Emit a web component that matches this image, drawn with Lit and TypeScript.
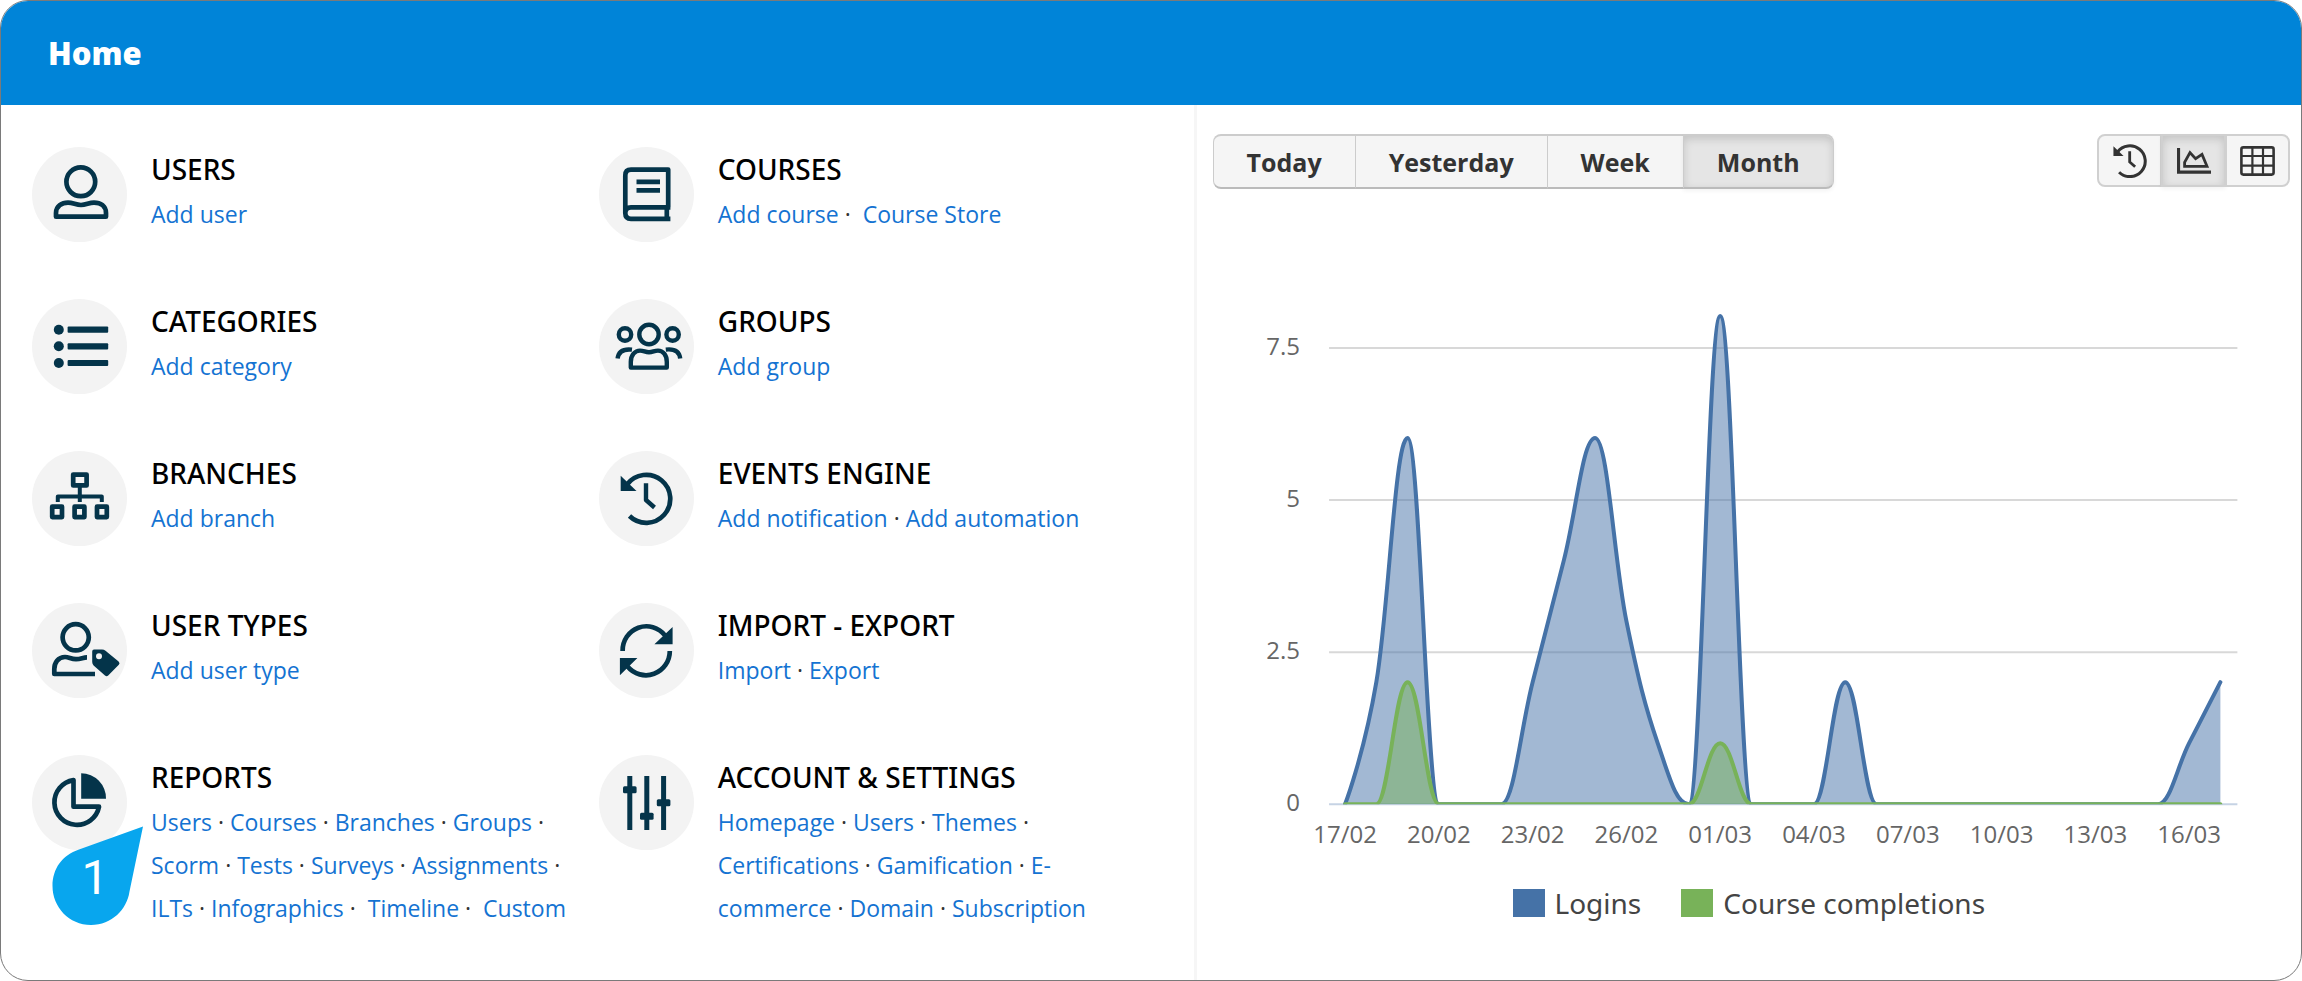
import { LitElement, html, css, svg, TemplateResult } from "lit";
import { customElement, property, state } from "lit/decorators.js";
import { classMap } from "lit/directives/class-map.js";

const historyShape = svg`
  <path d="M28 33.5 A24 24 0 1 1 30.5 65" fill="none" stroke="currentColor" stroke-width="4.7" />
  <path d="M21.7 24.7 V39.9 H37.5 Z" fill="currentColor" stroke="none" />
  <path d="M47 32.3 V49 L55.5 56.5" fill="none" stroke="currentColor" stroke-width="4.4" />
`;

const tileIcons: Record<string, TemplateResult> = {
  user: svg`
    <circle cx="48.8" cy="34.8" r="14.4" />
    <path d="M24 69.7 V66 C24 59 30 55.6 36 55.6 C41 55.6 44 58 49 58 C54 58 57 55.6 62 55.6 C68.5 55.6 74 59 74 66 V69.7 Z" />
  `,
  list: svg`
    <g class="solid">
      <circle cx="26.8" cy="30.7" r="5" /><circle cx="26.8" cy="47.3" r="5" /><circle cx="26.8" cy="64" r="5" />
      <rect x="35.6" y="27.6" width="40.6" height="6.2" rx="1" />
      <rect x="35.6" y="44.2" width="40.6" height="6.2" rx="1" />
      <rect x="35.6" y="60.9" width="40.6" height="6.2" rx="1" />
    </g>
  `,
  tree: svg`
    <rect x="41.2" y="23.6" width="13.4" height="10.8" />
    <path d="M47.8 36 V51 M25.8 51 V45.4 H69.8 V51" stroke-width="4" />
    <rect x="20.2" y="55.7" width="9.8" height="10.4" />
    <rect x="42.6" y="55.7" width="9.8" height="10.4" />
    <rect x="65" y="55.7" width="9.8" height="10.4" />
  `,
  userTag: svg`
    <circle cx="43.7" cy="34.3" r="13.1" />
    <path d="M55 54.3 C51 54.3 49 56.2 44 56.2 C39 56.2 37 54 33 54 C26 54 22.3 60 22.3 66 V71 H63" />
    <path class="solid" fill-rule="evenodd" d="M62 46.4 H70 Q72 46.4 73.5 47.8 L86.6 58.4 Q88.4 60 86.8 61.8 L76.2 72.4 Q74.6 74 73 72.4 L61.6 62.4 Q60.2 61 60.2 59 V48.4 Q60.2 46.4 62 46.4 Z M67 50.3 A3 3 0 1 0 67 56.3 A3 3 0 1 0 67 50.3 Z" />
  `,
  pie: svg`
    <path d="M41.5 25.1 V51.7 H67 A22.5 22.5 0 1 1 41.5 25.1 Z" />
    <path class="solid" d="M49.2 18.3 A25 25 0 0 1 74 43.7 H49.2 Z" />
  `,
  book: svg`
    <path d="M69.2 60.3 V22.6 H32 Q26.3 22.6 26.3 28.4 V66 Q26.3 71.8 32 71.8 H71.4 M26.3 66 Q26.3 60.3 32 60.3 H71.4 M67.8 60.3 V71.8" />
    <path d="M37.5 34.8 H61 M37.5 43.4 H61" />
  `,
  group: svg`
    <g stroke-width="4.4">
      <circle cx="50" cy="35.5" r="9.7" />
      <circle cx="26" cy="35.5" r="6.2" />
      <circle cx="73.6" cy="35.5" r="6.2" />
      <path d="M31.8 68.6 V63 C31.8 56 36 51.6 41 51.6 C45 51.6 46 53.2 50 53.2 C54 53.2 55 51.6 59 51.6 C64 51.6 67.8 56 67.8 63 V68.6 Z" />
      <path d="M33 50.6 C24 49.6 19.4 52.6 18.6 59.6 M66.8 50.6 C75.6 49.6 80.4 52.6 81.2 59.6" />
    </g>
  `,
  history: historyShape,
  sync: svg`
    <path d="M23.6 48 A23.8 24.2 0 0 1 66 32.4 M70.8 48 A23.8 24.2 0 0 1 28.6 63.4" />
    <path class="solid" d="M73.6 24 V41.3 H55.4 Z M20.9 72.2 V55 H38.4 Z" />
  `,
  sliders: svg`
    <path d="M30.8 21 V75 M47.8 21 V75 M64.6 21 V75" stroke-width="5" />
    <g class="solid">
      <rect x="24" y="31.2" width="13.6" height="7" rx="1.5" />
      <rect x="41" y="57.8" width="13.6" height="7" rx="1.5" />
      <rect x="57.8" y="44.2" width="13.6" height="7" rx="1.5" />
    </g>
  `,
};

interface Tile {
  icon: string;
  title: string;
  links: string[];
  /** Links whose separator is followed by a wider space. */
  wideAfter?: string[];
}

const tiles: Tile[] = [
  { icon: "user", title: "USERS", links: ["Add user"] },
  { icon: "book", title: "COURSES", links: ["Add course", "Course Store"], wideAfter: ["Add course"] },
  { icon: "list", title: "CATEGORIES", links: ["Add category"] },
  { icon: "group", title: "GROUPS", links: ["Add group"] },
  { icon: "tree", title: "BRANCHES", links: ["Add branch"] },
  { icon: "history", title: "EVENTS ENGINE", links: ["Add notification", "Add automation"] },
  { icon: "userTag", title: "USER TYPES", links: ["Add user type"] },
  { icon: "sync", title: "IMPORT - EXPORT", links: ["Import", "Export"] },
  {
    icon: "pie",
    title: "REPORTS",
    links: ["Users", "Courses", "Branches", "Groups", "Scorm", "Tests", "Surveys", "Assignments", "ILTs", "Infographics", "Timeline", "Custom"],
    wideAfter: ["Infographics", "Timeline"],
  },
  {
    icon: "sliders",
    title: "ACCOUNT & SETTINGS",
    links: ["Homepage", "Users", "Themes", "Certifications", "Gamification", "E-commerce", "Domain", "Subscription"],
  },
];

@customElement("nav-tile")
export class NavTile extends LitElement {
  @property({ attribute: false }) tile!: Tile;

  static styles = css`
    :host { display: flex; align-items: flex-start; gap: 24px; height: 95px; }
    .disc { flex: none; width: 95px; height: 95px; border-radius: 50%; background: #f3f3f3; color: #04344a; }
    .disc svg { display: block; width: 95px; height: 95px; fill: none; stroke: currentColor; stroke-width: 4.7; stroke-linejoin: round; }
    .disc .solid { fill: currentColor; stroke: none; }
    .body { flex: 1; min-width: 0; padding-right: 16px; color: #333; font-size: 23px; line-height: 43px; }
    .title { margin: 1px 0 3px; color: #000; font: 500 28px/42px "Noto Sans", "Open Sans", sans-serif; }
    .links { margin: 0; }
    .link { color: #1473d2; text-decoration: none; }
  `;

  render() {
    const { icon, title, links, wideAfter = [] } = this.tile;
    return html`
      <div class="disc"><svg viewBox="0 0 95 95" aria-hidden="true">${tileIcons[icon]}</svg></div>
      <div class="body">
        <h2 class="title">${title}</h2>
        <p class="links">${links.map((name, i) => html`<a class="link" href="#">${name}</a>${
          i === links.length - 1 ? "" : wideAfter.includes(name) ? " ·\u00a0 " : " · "
        }`)}</p>
      </div>
    `;
  }
}

const logins = [0, 2, 6, 0, 0, 0, 2, 4, 6, 3, 1, 0, 8, 0, 0, 0, 2, 0, 0, 0, 0, 0, 0, 0, 0, 0, 0, 1, 2];
const completions = logins.map((_, i) => (i === 2 ? 2 : i === 12 ? 1 : 0));
const dayLabels = ["17/02", "20/02", "23/02", "26/02", "01/03", "04/03", "07/03", "10/03", "13/03", "16/03"];

@customElement("activity-chart")
export class ActivityChart extends LitElement {
  static styles = css`
    :host { display: block; }
    .plot { display: block; width: 100%; height: auto; }
    .tick { fill: #666; font-size: 24px; }
    .grid { stroke: #d8d8d8; stroke-width: 2; }
    .axis { stroke: #c6d3e4; stroke-width: 2; }
    .line { fill: none; stroke-width: 4; stroke-linejoin: round; stroke-linecap: round; }
    .area { fill-opacity: 0.5; }
    .blue { stroke: #4572a7; }
    .green { stroke: #78b259; }
    .area.blue { fill: #4572a7; stroke: none; }
    .area.green { fill: #78b259; stroke: none; }
    .legend { display: flex; justify-content: center; gap: 40px; margin: 22px 0 0; padding: 0; list-style: none; color: #444; font: 28px/42px "Noto Sans", "Open Sans", sans-serif; }
    .entry { display: flex; align-items: center; gap: 10px; }
    .swatch { width: 32px; height: 28px; }
    .swatch.blue { background: #4572a7; }
    .swatch.green { background: #78b259; }
  `;

  private readonly left = 148;
  private readonly step = 31.25;
  private readonly base = 574;
  private readonly unit = 61;

  /** Smooth curve through the values whose control points never overshoot a neighbour. */
  private curve(values: number[]) {
    const pts = values.map((v, i) => [this.left + i * this.step, this.base - v * this.unit]);
    let d = `M${pts[0][0]} ${pts[0][1]}`;
    let [outX, outY] = pts[0];
    for (let i = 1; i < pts.length; i++) {
      const [x, y] = pts[i];
      const [px, py] = pts[i - 1];
      let inX = x, inY = y, nextOutX = x, nextOutY = y;
      if (i < pts.length - 1) {
        const [nx, ny] = pts[i + 1];
        inX = (1.5 * x + px) / 2.5;
        inY = (1.5 * y + py) / 2.5;
        nextOutX = (1.5 * x + nx) / 2.5;
        nextOutY = (1.5 * y + ny) / 2.5;
        const shift = ((nextOutY - inY) * (nextOutX - x)) / (nextOutX - inX) + y - nextOutY;
        inY += shift;
        nextOutY += shift;
        if (inY > py && inY > y) { inY = Math.max(py, y); nextOutY = 2 * y - inY; }
        else if (inY < py && inY < y) { inY = Math.min(py, y); nextOutY = 2 * y - inY; }
        if (nextOutY > ny && nextOutY > y) { nextOutY = Math.max(ny, y); inY = 2 * y - nextOutY; }
        else if (nextOutY < ny && nextOutY < y) { nextOutY = Math.min(ny, y); inY = 2 * y - nextOutY; }
      }
      d += ` C${outX} ${outY} ${inX} ${inY} ${x} ${y}`;
      outX = nextOutX;
      outY = nextOutY;
    }
    return d;
  }

  private series(values: number[], tone: string) {
    const d = this.curve(values);
    const end = this.left + (values.length - 1) * this.step;
    return svg`
      <path class="area ${tone}" d="${d} L${end} ${this.base} L${this.left} ${this.base} Z" />
      <path class="line ${tone}" d=${d} />
    `;
  }

  render() {
    return html`
      <svg class="plot" viewBox="0 0 1104 630" role="img" aria-label="Logins and course completions">
        <clipPath id="inside"><rect x="132" y="60" width="912" height="514" /></clipPath>
        ${[7.5, 5, 2.5, 0].map((v, i) => {
          const y = 118 + i * 152;
          return svg`
            <line class=${v ? "grid" : "axis"} x1="132" x2="1040" y1=${y} y2=${y} />
            <text class="tick" x="103" y=${y + 7} text-anchor="end">${v}</text>`;
        })}
        <g clip-path="url(#inside)">
          ${this.series(logins, "blue")}${this.series(completions, "green")}
        </g>
        ${dayLabels.map((t, i) => svg`<text class="tick" x=${this.left + i * 3 * this.step} y="613" text-anchor="middle">${t}</text>`)}
      </svg>
      <ul class="legend">
        <li class="entry"><span class="swatch blue"></span>Logins</li>
        <li class="entry"><span class="swatch green"></span>Course completions</li>
      </ul>
    `;
  }
}

const viewIcons: [string, TemplateResult][] = [
  ["Timeline", html`<svg width="34" height="34" viewBox="21 21 53 53" aria-hidden="true">${historyShape}</svg>`],
  ["Chart", html`<svg width="34" height="26" viewBox="0 0 34 26" fill="none" stroke="currentColor" aria-hidden="true">
    <path d="M1.5 0 V24.2 H34" stroke-width="3.2" />
    <path d="M7.6 18.3 V14.4 L13 4.6 L18.6 10.6 L25 6.4 L30 18.3 Z" stroke-width="2.8" />
  </svg>`],
  ["Table", html`<svg width="35" height="30" viewBox="0 0 35 30" fill="none" stroke="currentColor" aria-hidden="true">
    <rect x="1.4" y="1.4" width="32.2" height="27.2" rx="2" stroke-width="2.6" />
    <path d="M12.4 1 V29 M23 1 V29 M1 10 H34 M1 19.6 H34" stroke-width="2.2" />
  </svg>`],
];

@customElement("app-root")
export class AppRoot extends LitElement {
  @state() private range = "Month";
  @state() private view = "Chart";

  static styles = css`
    :host { display: block; font-family: "Open Sans", "Noto Sans", sans-serif; }
    .frame { display: flex; flex-direction: column; box-sizing: border-box; min-height: 100vh; overflow: hidden; border: 1px solid #7a7a7a; border-radius: 28px; background: #fff; }
    .header { display: flex; align-items: center; height: 104px; padding: 0 47px; background: #0084d8; color: #fff; }
    .heading { margin: 0; font-size: 31px; font-weight: 800; }
    .columns { flex: 1; display: grid; grid-template-columns: 14fr 13fr; }
    .tiles { display: grid; grid-template-columns: 1fr 1fr; align-content: start; row-gap: 57px; padding: 42px 28px 0 31px; }
    .anchor { position: relative; }
    .callout { position: absolute; left: 20px; top: 71px; width: 92px; height: 100px; }
    .callout svg { display: block; }
    .number { position: absolute; left: 0; top: 24px; width: 86px; color: #fff; font: 48px/56px Roboto, sans-serif; text-align: center; }
    .stats { border-left: 3px solid #f6f6f6; }
    .toolbar { display: flex; justify-content: space-between; align-items: flex-start; margin-bottom: 41px; padding: 29px 11px 0 16px; }
    .group { display: flex; }
    .button { display: flex; align-items: center; justify-content: center; box-sizing: border-box; height: 55px; margin: 0 0 0 -1px; padding: 0 33px; border: 2px solid #ccc; border-left-width: 1px; border-right-width: 1px; border-bottom-color: #bbb; background: #f5f5f5; color: #333; font: 700 25px/34px "Open Sans", sans-serif; cursor: pointer; }
    .button:first-child { margin-left: 0; border-radius: 8px 0 0 8px; }
    .button:last-child { border-radius: 0 8px 8px 0; }
    .button.active { background: #e5e5e5; box-shadow: inset 0 3px 8px rgba(0, 0, 0, 0.15), 0 2px 4px rgba(0, 0, 0, 0.05); }
    .button.view { width: 65px; height: 53px; padding: 0; border: 2px solid #d0d0d0; }
  `;

  render() {
    return html`
      <div class="frame">
        <header class="header"><h1 class="heading">Home</h1></header>
        <main class="columns">
          <nav class="tiles">
            ${tiles.map((tile) => html`
              <div class="anchor">
                <nav-tile .tile=${tile}></nav-tile>
                ${tile.icon === "pie" ? html`
                  <div class="callout">
                    <svg width="92" height="100" viewBox="0 0 92 100" aria-hidden="true">
                      <path fill="#08a6ee" d="M91 0.5 L27 23.5 C10 29 0.5 43 0.5 60 C0.5 81 17 99 39 99 C60 99 75 83 77.4 66 Z" />
                    </svg>
                    <span class="number">1</span>
                  </div>` : ""}
              </div>`)}
          </nav>
          <section class="stats">
            <div class="toolbar">
              <div class="group">
                ${["Today", "Yesterday", "Week", "Month"].map((name) => html`
                  <button type="button" class=${classMap({ button: true, active: this.range === name })}
                    @click=${() => (this.range = name)}>${name}</button>`)}
              </div>
              <div class="group">
                ${viewIcons.map(([name, icon]) => html`
                  <button type="button" aria-label=${name} class=${classMap({ button: true, view: true, active: this.view === name })}
                    @click=${() => (this.view = name)}>${icon}</button>`)}
              </div>
            </div>
            <activity-chart></activity-chart>
          </section>
        </main>
      </div>
    `;
  }
}
